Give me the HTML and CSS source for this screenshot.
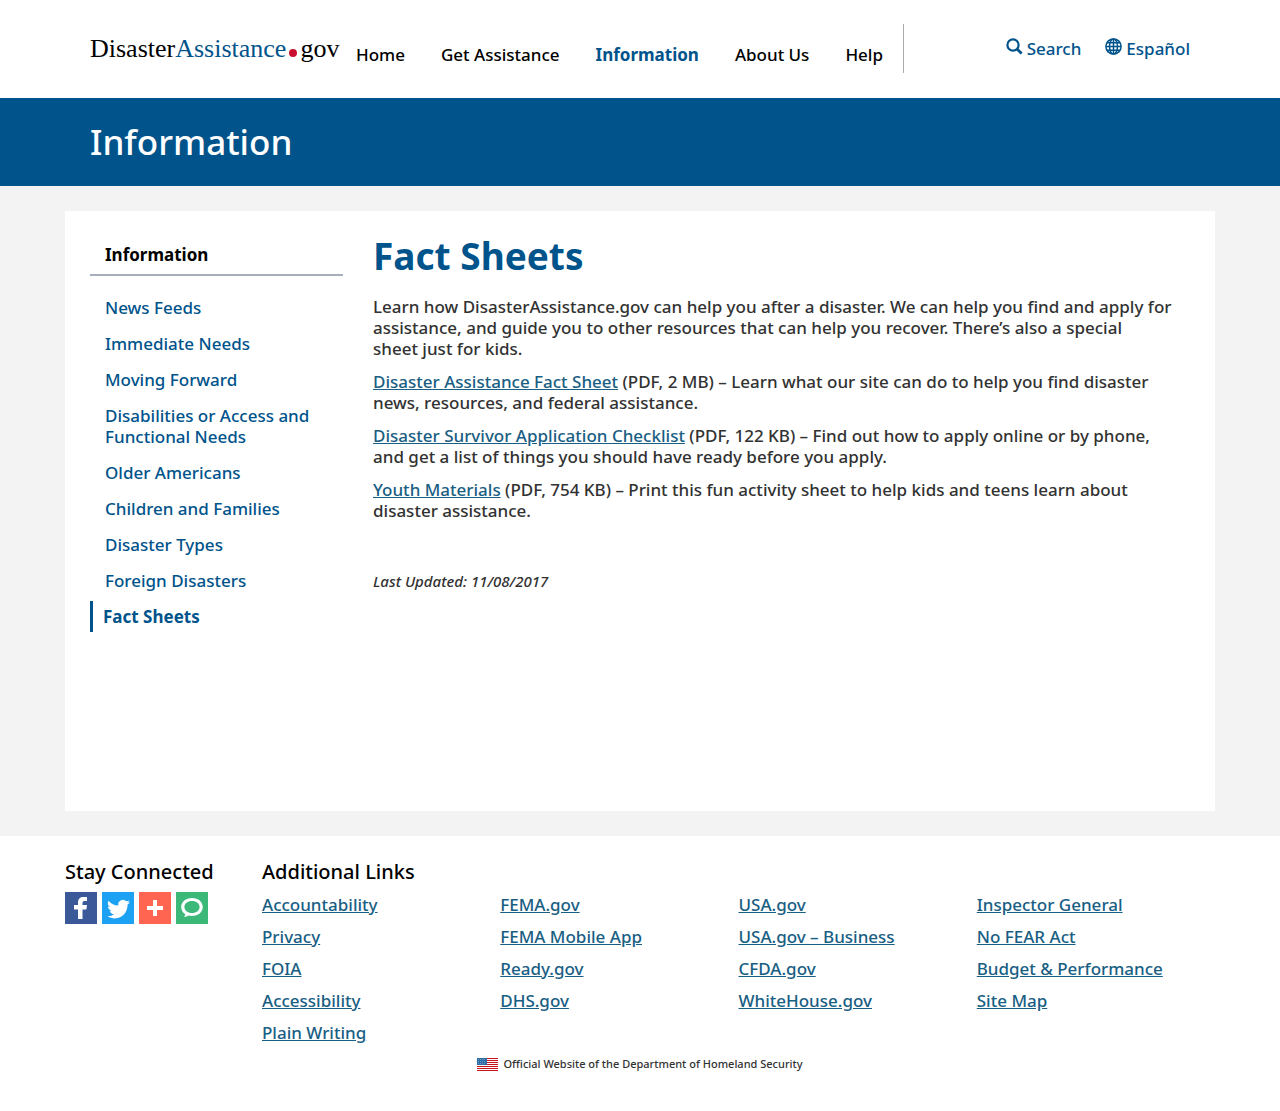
FILE: index.html
```html
<!DOCTYPE html>
<html lang="en">
<head>
<meta charset="utf-8">
<meta name="viewport" content="width=device-width, initial-scale=1">
<title>Fact Sheets | DisasterAssistance.gov</title>
<link rel="stylesheet" href="styles.css">
</head>
<body>
<header class="header container">
  <a class="logo" href="#">Disaster<span class="logo-accent">Assistance</span><span class="logo-dot"></span>gov</a>
  <nav class="nav" aria-label="Main">
    <a href="#">Home</a>
    <a href="#">Get Assistance</a>
    <a class="current" href="#">Information</a>
    <a href="#">About Us</a>
    <a href="#">Help</a>
  </nav>
  <div class="tools">
    <a href="#"><svg width="17" height="17" viewBox="0 0 17 17" aria-hidden="true"><circle cx="7" cy="7" r="5.6" fill="none" stroke="currentColor" stroke-width="2.2"/><path d="M11 11l4.6 4.6" stroke="currentColor" stroke-width="2.8"/></svg>Search</a>
    <a href="#"><svg width="17" height="17" viewBox="0 0 17 17" aria-hidden="true"><g fill="none" stroke="currentColor" stroke-width="1.5"><circle cx="8.500" cy="8.500" r="7.600"/><ellipse cx="8.500" cy="8.500" rx="4" ry="7.600"/><path d="M8.500 1v15M1 8.500h15M2 4.800h13M2 12.200h13"/></g></svg>Español</a>
  </div>
</header>
<div class="banner"><div class="container banner-title">Information</div></div>
<div class="page">
  <div class="card">
    <nav class="sidebar" aria-label="Information">
      <h2>Information</h2>
      <ul>
        <li><a href="#">News Feeds</a></li>
        <li><a href="#">Immediate Needs</a></li>
        <li><a href="#">Moving Forward</a></li>
        <li><a href="#">Disabilities or Access and Functional Needs</a></li>
        <li><a href="#">Older Americans</a></li>
        <li><a href="#">Children and Families</a></li>
        <li><a href="#">Disaster Types</a></li>
        <li><a href="#">Foreign Disasters</a></li>
        <li><a class="active" href="#">Fact Sheets</a></li>
      </ul>
    </nav>
    <main class="content">
      <h1>Fact Sheets</h1>
      <p>Learn how DisasterAssistance.gov can help you after a disaster. We can help you find and apply for assistance, and guide you to other resources that can help you recover. There’s also a special sheet&nbsp;just&nbsp;for kids.</p>
      <p><a href="#">Disaster Assistance Fact Sheet</a> (PDF, 2 MB) – Learn what our site can do to help you find disaster news, resources, and federal assistance.</p>
      <p><a href="#">Disaster Survivor Application Checklist</a> (PDF, 122 KB) – Find out how to apply online or by phone, and&nbsp;get&nbsp;a list of things you should have ready before you apply.</p>
      <p><a href="#">Youth Materials</a> (PDF, 754 KB) – Print this fun activity sheet to help kids and teens learn about disaster assistance.</p>
      <p class="updated">Last Updated: 11/08/2017</p>
    </main>
  </div>
</div>
<footer class="footer">
  <div class="footer-main">
    <section class="connect">
      <h2>Stay Connected</h2>
      <div class="social">
        <a class="facebook" href="#" aria-label="Facebook"><svg viewBox="0 0 32 32"><path fill="#fff" d="M13 27V17.500H9V13h4v-2.500C13 7 15 5 18.500 5H22v4h-2.500c-1.500 0-2 .7-2 2v2H22l-.6 4.500h-3.900V27z"/></svg></a>
        <a class="twitter" href="#" aria-label="Twitter"><svg viewBox="0 0 32 32"><path fill="#fff" d="M28 10c-.8.400-1.700.700-2.700.800 1-.6 1.700-1.500 2-2.600-.9.500-1.900.9-3 1.100a4.700 4.700 0 0 0-8 4.300c-4-.2-7.400-2.100-9.700-4.900a4.700 4.700 0 0 0 1.500 6.200c-.8 0-1.500-.2-2.100-.6 0 2.300 1.600 4.200 3.800 4.700-.7.200-1.400.2-2.100.1.600 1.800 2.300 3.200 4.400 3.200A9.500 9.500 0 0 1 5.500 24.300c8.500 5.400 20.100.3 20.100-11.700 1-.7 1.800-1.600 2.400-2.600z"/></svg></a>
        <a class="share" href="#" aria-label="Share"><svg viewBox="0 0 32 32"><path d="M16 8v16M8 16h16" stroke="#fff" stroke-width="4"/></svg></a>
        <a class="blog" href="#" aria-label="Blog"><svg viewBox="0 0 32 32"><path fill="#fff" fill-rule="evenodd" d="M16 6c6.200 0 10.800 3.900 10.800 9S22.200 24 16 24c-1.200 0-2.300-.1-3.300-.4-1.500 1-3.200 1.500-4.700 1.400 1-.9 1.200-1.800 1-2.900C6.600 20.400 5.200 17.900 5.200 15 5.200 9.900 9.800 6 16 6zm0 3c-4.400 0-7.600 2.600-7.600 6s3.200 6 7.600 6 7.600-2.600 7.600-6-3.200-6-7.600-6z"/></svg></a>
      </div>
    </section>
    <section class="links">
      <h2>Additional Links</h2>
      <div class="link-grid">
        <ul>
          <li><a href="#">Accountability</a></li>
          <li><a href="#">Privacy</a></li>
          <li><a href="#">FOIA</a></li>
          <li><a href="#">Accessibility</a></li>
          <li><a href="#">Plain Writing</a></li>
        </ul>
        <ul>
          <li><a href="#">FEMA.gov</a></li>
          <li><a href="#">FEMA Mobile App</a></li>
          <li><a href="#">Ready.gov</a></li>
          <li><a href="#">DHS.gov</a></li>
        </ul>
        <ul>
          <li><a href="#">USA.gov</a></li>
          <li><a href="#">USA.gov – Business</a></li>
          <li><a href="#">CFDA.gov</a></li>
          <li><a href="#">WhiteHouse.gov</a></li>
        </ul>
        <ul>
          <li><a href="#">Inspector General</a></li>
          <li><a href="#">No FEAR Act</a></li>
          <li><a href="#">Budget &amp; Performance</a></li>
          <li><a href="#">Site Map</a></li>
        </ul>
      </div>
    </section>
  </div>
  <p class="official"><svg width="21" height="13" viewBox="0 0 21 13" shape-rendering="crispEdges" aria-hidden="true"><path fill="#fff" d="M0 0h21v13H0z"/><path d="M0 .5h21M0 2.500h21M0 4.500h21M0 6.500h21M0 8.500h21M0 10.500h21M0 12.500h21" stroke="#c8141e"/><path fill="#2f6ca3" d="M0 0h10v7H0z"/><path d="M1 1.500h8M1 3.500h8M1 5.500h8" stroke="#6b9ac4" stroke-dasharray="1 1"/></svg>Official Website of the Department of Homeland Security</p>
</footer>
</body>
</html>
```
FILE: styles.css
```css
* { box-sizing: border-box; }
body {
  margin: 0;
  background: #fff;
  color: #323232;
  font: 500 17px/21px "Noto Sans", sans-serif;
}
h1, h2, p, ul { margin: 0; padding: 0; }
ul { list-style: none; }
a { color: #00538b; text-decoration: none; }
svg { display: block; }

.container { max-width: 1150px; margin: 0 auto; padding: 0 25px; }

.header { display: flex; align-items: flex-start; padding-top: 24px; padding-bottom: 25px; }
.logo {
  width: 250px;
  padding-top: 10px;
  font: 400 26px/30px "Liberation Serif", serif;
  color: #000;
  white-space: nowrap;
}
.logo-accent { color: #00538b; }
.logo-dot {
  display: inline-block;
  width: 8px;
  height: 8px;
  margin: 0 3px;
  border-radius: 50%;
  background: #c8102e;
}
.nav {
  display: flex;
  gap: 36px;
  height: 49px;
  margin-left: 16px;
  padding: 20px 20px 0 0;
  border-right: 1px solid #aaadb0;
  white-space: nowrap;
}
.nav a { color: #000; }
.nav .current { color: #00538b; font-weight: 700; }
.tools { display: flex; gap: 24px; margin-left: auto; padding-top: 14px; }
.tools a { display: flex; gap: 4px; }

.banner { background: #00538b; }
.banner-title { padding-top: 20px; padding-bottom: 20px; color: #fff; font-size: 35px; line-height: 48px; }

.page { padding: 25px 0; background: #f3f3f3; }
.card {
  display: flex;
  gap: 30px;
  max-width: 1150px;
  min-height: 600px;
  margin: 0 auto;
  padding: 25px;
  background: #fff;
}
.sidebar { flex: 0 0 253px; }
.sidebar h2 {
  margin-bottom: 16px;
  padding: 8px 15px 9px;
  border-bottom: 2px solid #a7aebb;
  color: #000;
  font-size: 17px;
  line-height: 21px;
}
.sidebar li { margin-bottom: 5px; }
.sidebar a { display: block; padding: 5px 15px; }
.sidebar .active { padding-left: 10px; border-left: 3px solid #00538b; font-weight: 700; }
.content { flex: 1; }
.content h1 { margin-bottom: 20px; color: #00538b; font-size: 37px; line-height: 40px; }
.content p { margin-bottom: 12px; }
.content p a, .link-grid a { color: #195e83; text-decoration: underline; }
.content .updated { margin-top: 50px; font-size: 15px; font-style: italic; }

.footer { padding: 25px 0 35px; }
.footer-main { display: flex; max-width: 1150px; margin: 0 auto; }
.footer h2 { color: #000; font-size: 20px; font-weight: 500; line-height: 22px; }
.connect { flex: 0 0 197px; }
.social { display: flex; gap: 5px; margin-top: 9px; }
.social a { width: 32px; height: 32px; }
.facebook { background: #3b5998; }
.twitter { background: #1da1f2; }
.share { background: #ff6550; }
.blog { background: #3cb878; }
.links { flex: 1; }
.link-grid { display: grid; grid-template-columns: repeat(4, 1fr); margin-top: 6px; }
.link-grid li { line-height: 32px; }
.official {
  display: flex;
  align-items: center;
  justify-content: center;
  gap: 5px;
  margin-top: 5px;
  font-size: 11px;
  line-height: 20px;
}
```
